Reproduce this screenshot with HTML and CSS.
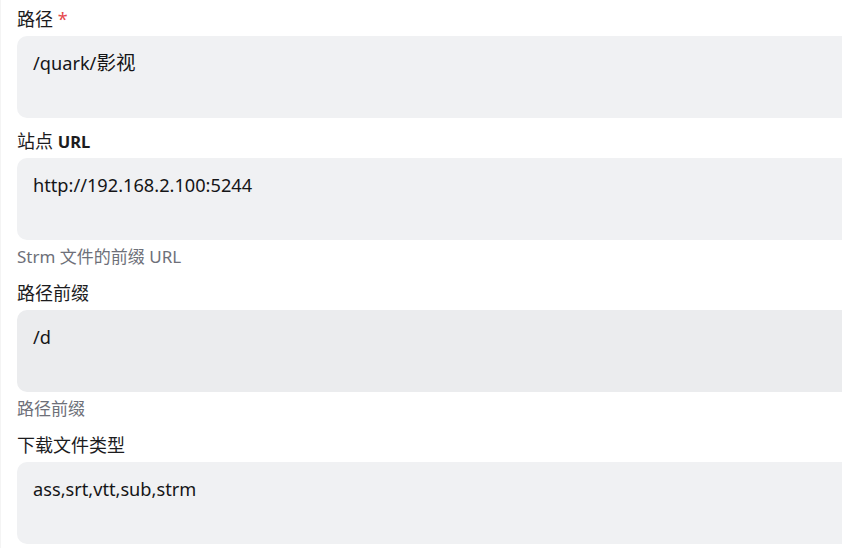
FILE: index.html
```html
<!DOCTYPE html>
<html lang="zh">
<head>
<meta charset="utf-8">
<link rel="stylesheet" href="styles.css">
</head>
<body>
<div class="page">
  <div class="field">
    <div class="label">路径 <span class="req">*</span></div>
    <div class="box">/quark/<span class="cjk">影视</span></div>
  </div>
  <div class="field">
    <div class="label">站点 <b>URL</b></div>
    <div class="box">http://192.168.2.100:5244</div>
    <div class="help">Strm 文件的前缀 URL</div>
  </div>
  <div class="field">
    <div class="label">路径前缀</div>
    <div class="box box-hover">/d</div>
    <div class="help">路径前缀</div>
  </div>
  <div class="field">
    <div class="label">下载文件类型</div>
    <div class="box">ass,srt,vtt,sub,strm</div>
  </div>
</div>
</body>
</html>
```
FILE: styles.css
```css
html, body {
  margin: 0;
  padding: 0;
  background: #ffffff;
}
.page {
  box-sizing: border-box;
  height: 548px;
  border-left: 1px solid #f4f4f4;
  padding: 6px 0 0 16px;
  font-family: "Noto Sans", "Noto Sans CJK SC", sans-serif;
  color: #1c1c1e;
  overflow: hidden;
}
.field {
  display: flex;
  flex-direction: column;
  margin-bottom: 10px;
}
.label {
  font-size: 18px;
  line-height: 26px;
  height: 26px;
  margin-bottom: 4px;
  white-space: nowrap;
}
.label b {
  font-weight: 700;
  font-size: 16.5px;
}
.req {
  color: #e5484d;
}
.box {
  box-sizing: border-box;
  height: 82px;
  background: #f0f1f3;
  border-radius: 10px 0 0 10px;
  padding: 14px 16px;
  font-size: 18.2px;
  line-height: 26px;
  color: #151517;
  margin-right: -20px;
  white-space: nowrap;
}
.cjk {
  font-size: 19.5px;
}
.box-hover {
  background: #ebecee;
}
.help {
  font-size: 17px;
  line-height: 26px;
  height: 26px;
  margin-top: 4px;
  color: #6e7079;
  white-space: nowrap;
}
```
